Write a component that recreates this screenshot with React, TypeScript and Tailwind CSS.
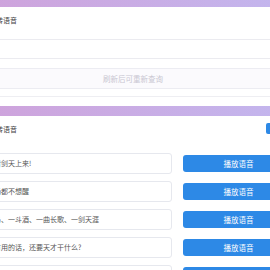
const rows = [
  "挑灯看剑天上来!",
  "醉一场都不想醒",
  "一匹马、一斗酒、一曲长歌、一剑天涯",
  "努力有用的话，还要天才干什么?",
  "有梦想、还要努力",
];

const font = { fontFamily: '"Noto Sans CJK SC", "Noto Sans", sans-serif' };

function Bar() {
  return <div className="h-[10px] bg-gradient-to-r from-[#cfa1da] to-[#c2b7ef]" />;
}

export default function App() {
  return (
    <div className="w-full h-screen overflow-hidden bg-white" style={font}>
      <div className="-ml-[40px] -mt-[3px] w-[346px] flex flex-col gap-[9px]">
        {/* query card */}
        <div className="bg-white border-b border-[#eeeef2]">
          <Bar />
          <div className="px-[12px] pb-[7px]">
            <div className="ml-[10px] pt-[8px] h-[18px] text-[7px] leading-[10px] text-[#444]">
              文字转语音
            </div>
            <div className="mt-[14px] h-[20px] rounded-[3px] border border-[#ebebf0] bg-white" />
            <div className="mt-[9px] h-[21px] rounded-[3px] border border-[#ececf2] bg-[#fbfafd] flex items-center justify-center text-[7.5px] text-[#c9c7d2]">
              刷新后可重新查询
            </div>
          </div>
        </div>

        {/* list card */}
        <div className="bg-white">
          <Bar />
          <div className="px-[12px]">
            <div className="pt-[7px] flex items-center justify-between">
              <span className="ml-[10px] text-[7px] leading-[10px] text-[#444]">文字转语音</span>
              <span className="h-[11px] w-[28px] rounded-[2px] bg-[#2d89e6]" />
            </div>
            <div className="mt-[19px] flex flex-col gap-[7px]">
              {rows.map((t) => (
                <div key={t} className="flex items-center gap-[11px]">
                  <div className="w-[200px] h-[21px] shrink-0 rounded-[3px] border border-[#e6e8ee] bg-white pl-[7px] flex items-center text-[7px] text-[#555] whitespace-nowrap overflow-hidden">
                    {t}
                  </div>
                  <button className="flex-1 h-[17px] rounded-[3px] bg-[#2d89e6] text-white text-[7.5px] leading-none">
                    播放语音
                  </button>
                </div>
              ))}
            </div>
          </div>
        </div>
      </div>
    </div>
  );
}
